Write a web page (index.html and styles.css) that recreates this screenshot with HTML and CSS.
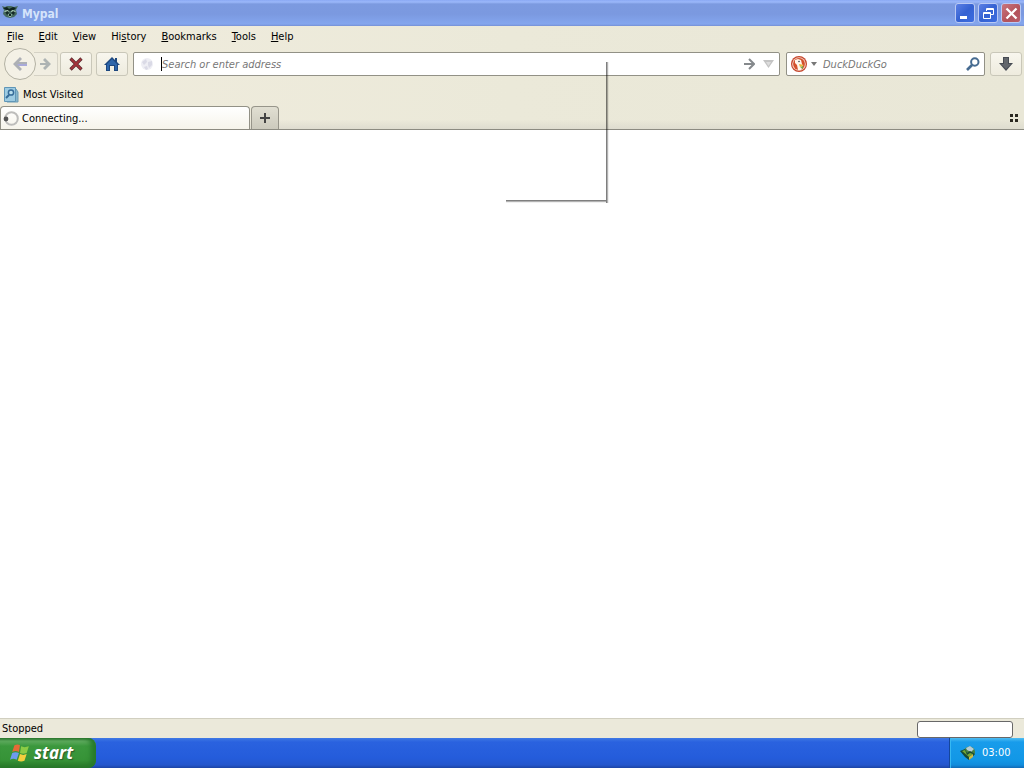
FILE: index.html
```html
<!DOCTYPE html>
<html lang="en">
<head>
<meta charset="utf-8">
<title>Mypal</title>
<link rel="stylesheet" href="styles.css">
</head>
<body>
<header class="titlebar">
  <svg class="app-icon" width="16" height="16" viewBox="0 0 16 16"><path d="M0 2l3 1 2-1h4l3 1 4-1-2 4 1 4-3 3-4 1-4-1-3-3 1-4z" fill="#45695f"/><path d="M1 4l4-1 2 2 4-2 3 1-2 2-4 1-4-1z" fill="#10231f"/><path d="M2 7l4-1 1 2-3 1zM9 8l1-2 4 1-2 2z" fill="#b2d3bd"/><path d="M3 8l3-1 1 2-2 2zM9 9l2-2 2 1-1 3z" fill="#152a25"/><path d="M6 10h4l-1 3H7z" fill="#93b79d"/><path d="M7 10h2v2H7z" fill="#122"/></svg>
  <span class="title">Mypal</span>
  <button class="win-btn" aria-label="Minimize"><svg width="19" height="19" viewBox="0 0 19 19"><path d="M4 12h7v3H4z" fill="#fff"/></svg></button>
  <button class="win-btn" aria-label="Restore"><svg width="19" height="19" viewBox="0 0 19 19" fill="none" stroke="#fff"><path d="M7.500 7V4.500h7v6H12M7 5.500h8M4.500 8.500h7v6h-7zM4 9.500h8"/></svg></button>
  <button class="win-btn close" aria-label="Close"><svg width="19" height="19" viewBox="0 0 19 19"><path d="M4.500 4.500l10 10M14.500 4.500l-10 10" stroke="#fff" stroke-width="2.300"/></svg></button>
</header>
<div class="toolbox">
  <nav class="menubar">
    <button><u>F</u>ile</button><button><u>E</u>dit</button><button><u>V</u>iew</button><button>Hi<u>s</u>tory</button><button><u>B</u>ookmarks</button><button><u>T</u>ools</button><button><u>H</u>elp</button>
  </nav>
  <div class="navbar">
    <div class="history">
      <button class="back" aria-label="Back"><svg width="18" height="16" viewBox="0 0 18 16"><path d="M9 1L2 8l7 7 2-2-3-3h8V6H8l3-3z" fill="#adb0b5"/><path d="M6 8h10v2H8z" fill="#a9aada"/></svg></button>
      <button class="forward" aria-label="Forward"><svg width="13" height="14" viewBox="0 0 13 14"><path d="M6 1l6 6-6 6-2-2 3-3H1V6h6L4 3z" fill="#adb3b3"/></svg></button>
    </div>
    <button class="tool stop" aria-label="Stop"><svg width="16" height="16" viewBox="0 0 16 16"><path d="M2.500 2.500l11 11M13.500 2.500l-11 11" stroke="#5b2d31" stroke-width="3.200"/><path d="M3 3l10 10M13 3L3 13" stroke="#a5343b" stroke-width="1.800"/></svg></button>
    <button class="tool home" aria-label="Home"><svg width="16" height="16" viewBox="0 0 16 16"><path d="M8 1L0 9h2v6h4v-5h4v5h4V9h2l-3-3V2h-2v2z" fill="#1d477f"/><path d="M8 3L3 8v6h2V9h6v5h2V8z" fill="#2d65aa"/></svg></button>
    <div class="field address">
      <svg width="14" height="14" viewBox="0 0 14 14"><circle cx="7" cy="7" r="6" fill="#eeeef4"/><path d="M2 5l4-3 1 3-3 3zM8 5l4-1v4l-3 3-1-3zM4 10l3-1 1 3-2 1z" fill="#dadae6"/></svg>
      <span class="caret"></span>
      <input type="text" aria-label="Address" placeholder="Search or enter address">
      <svg width="11" height="12" viewBox="0 0 11 12" fill="none" stroke="#85898c" stroke-width="2"><path d="M0 6h9M5 1l5 5-5 5"/></svg>
      <svg class="drop" width="11" height="8" viewBox="0 0 11 8"><path d="M0 0h11L5.500 8z" fill="#c4c4c4"/><path d="M3 2h5L5.500 6z" fill="#ddd"/></svg>
    </div>
    <div class="field search">
      <svg width="16" height="16" viewBox="0 0 16 16"><circle cx="8" cy="8" r="8" fill="#c5452b"/><circle cx="8" cy="8" r="6.800" fill="#f5d9cd"/><circle cx="8" cy="8" r="5.900" fill="#d4502c"/><path d="M4 4l3-1 3 1 1 4 1 2-2 4H7L6 9 4 7z" fill="#fff6eb"/><path d="M8 8l5 1-4 2z" fill="#edb83a"/><path d="M9 11l3-1v3z" fill="#70a545"/><circle cx="8" cy="5.500" r=".8" fill="#345"/></svg>
      <svg class="engine-drop" width="6" height="4" viewBox="0 0 6 4"><path d="M0 0h6L3 4z" fill="#777"/></svg>
      <input type="text" aria-label="Search" placeholder="DuckDuckGo">
      <svg width="14" height="14" viewBox="0 0 14 14" fill="none" stroke="#466b91"><circle cx="8.800" cy="5" r="3.700" stroke-width="2"/><path d="M6 8l-5 5" stroke-width="2.600"/></svg>
    </div>
    <button class="tool" aria-label="Downloads"><svg width="16" height="16" viewBox="0 0 16 16"><path d="M5 1h6v6h4l-7 8-7-8h4z" fill="#454a52"/><path d="M6 2h4v6h3l-5 5-5-5h3z" fill="#62666c"/></svg></button>
  </div>
  <div class="bookmarks">
    <svg width="15" height="16" viewBox="0 0 15 16"><path d="M3 2h9l2 3v10H3z" fill="#87b6cc" stroke="#6b9ab4"/><path d="M.5.5h11v14H.5z" fill="#9dcbe2" stroke="#6096b7"/><circle cx="7" cy="5.500" r="2.600" fill="#b9deed" stroke="#356b98" stroke-width="1.500"/><path d="M5 8l-3 3" stroke="#356b98" stroke-width="2"/></svg>
    <a href="#">Most Visited</a>
  </div>
  <div class="tabs">
    <button class="tab"><svg width="16" height="16" viewBox="0 0 16 16"><circle cx="8.500" cy="7.500" r="6.300" fill="none" stroke="#bdbdbb" stroke-width="2"/><circle cx="3" cy="8" r="2.400" fill="#555"/></svg><span>Connecting...</span></button>
    <button class="new-tab" aria-label="New tab"><svg width="12" height="12" viewBox="0 0 12 12"><path d="M5 1h2v4h4v2H7v4H5V7H1V5h4z" fill="#444"/></svg></button>
    <button class="groups" aria-label="Tab groups"><svg width="8" height="8" viewBox="0 0 8 8"><path d="M0 0h3v3H0zM5 0h3v3H5zM0 5h3v3H0zM5 5h3v3H5z" fill="#292720"/></svg></button>
  </div>
</div>
<main class="content"></main>
<div class="ghost-shadow"></div>
<footer class="status"><span>Stopped</span><div class="progress"></div></footer>
<div class="taskbar">
  <button class="start"><svg width="20" height="20" viewBox="0 0 18 18"><path d="M4 2c2-1 4-1 5 0L8 8c-2-1-4-1-6 0z" fill="#e56a37"/><path d="M10 3c2 1 4 1 7 0l-2 6c-2 1-4 1-6 0z" fill="#8bcb45"/><path d="M2 9c2-1 4-1 6 0l-2 6c-2-1-4-1-6 0z" fill="#6e9bee"/><path d="M9 10c2 1 4 1 6 0l-2 6c-2 1-4 1-6 0z" fill="#f3ce3e"/></svg>start</button>
  <div class="tray"><svg width="16" height="16" viewBox="0 0 16 16"><circle cx="9.500" cy="7" r="5.500" fill="#4a8143"/><path d="M6 3l4-2 4 3-3 3-4-2z" fill="#b5ccd6"/><path d="M0 6l5-2 2 4 3-2 5 3-6 6-4-3z" fill="#174a36"/><path d="M2 6l3-1 2 5 3-2 3 1-4 3z" fill="#75a634"/><path d="M9 12l4-3v3l-4 3z" fill="#cebb45"/></svg><time>03:00</time></div>
</div>
</body>
</html>
```
FILE: styles.css
```css
* { box-sizing: border-box; }
body {
  margin: 0;
  height: 100vh;
  display: flex;
  flex-direction: column;
  overflow: hidden;
  background: #fff;
  color: #000;
  font: 11px/14px "DejaVu Sans Condensed", "DejaVu Sans", sans-serif;
}
button, input { font: inherit; color: inherit; padding: 0; border: 0; background: none; }
svg { display: block; flex: none; }

.titlebar {
  display: flex;
  align-items: center;
  gap: 4px;
  height: 26px;
  padding: 0 3px 0 2px;
  background: linear-gradient(#8aa9f4 0, #9bb8fa 2px, #7c9ae0 4px, #7b99e0 14px, #84a6ee 24px, #7590d5 26px);
}
.app-icon { align-self: flex-start; margin-top: 4px; }
.title { flex: 1; padding-top: 1px; color: #d5e4fb; font: bold 12px/16px "DejaVu Sans Condensed", sans-serif; }
.win-btn {
  display: grid;
  place-items: center;
  width: 20px;
  height: 20px;
  border: 1px solid #b9c9f4;
  border-radius: 3px;
  background: linear-gradient(135deg, #5c80e5, #3562d2 50%, #3c6ce0);
}
.win-btn + .win-btn { margin-left: -1px; }
.win-btn.close { background: linear-gradient(135deg, #c9767e, #b3525a 60%, #b85d6b); }

.toolbox { background: linear-gradient(90deg, #f0ecdd, #ebe9d9 50%, #e9e7d7); }
.menubar { display: flex; align-items: center; gap: 15px; height: 21px; padding: 0 7px; }
.navbar { display: flex; align-items: center; height: 34px; padding: 0 2px 0 4px; }
.history { display: flex; align-items: center; margin-right: 2px; }
.back {
  display: grid;
  place-items: center;
  width: 32px;
  height: 32px;
  border: 1px solid #b3b1a3;
  border-radius: 50%;
  background: #f4f1e6;
  z-index: 1;
}
.forward {
  display: grid;
  place-items: center;
  width: 24px;
  height: 24px;
  margin-left: -2px;
  border: 1px solid #d5d2c5;
  border-left: 0;
  border-radius: 0 3px 3px 0;
  background: #f1eee2;
}
.tool {
  display: grid;
  place-items: center;
  width: 32px;
  height: 24px;
  border: 1px solid #c9c7b9;
  border-radius: 3px;
  background: linear-gradient(#f8f6ee, #eeebde);
}
.home { margin: 0 5px 0 4px; }
.field {
  display: flex;
  align-items: center;
  height: 24px;
  border: 1px solid #929186;
  border-radius: 2px;
  background: #fff;
}
.field input { flex: 1; min-width: 0; height: 20px; padding-top: 1px; outline: 0; font-style: italic; }
.field input::placeholder { color: #777; opacity: 1; }
.address { flex: 1; padding: 0 5px 0 6px; }
.caret { width: 1px; height: 14px; margin-left: 7px; background: #000; }
.drop { margin-left: 8px; }
.search { width: 199px; margin: 0 5px 0 6px; padding: 0 4px; }
.engine-drop { margin: 0 6px 0 4px; }

.bookmarks { display: flex; align-items: center; gap: 4px; height: 25px; padding: 2px 4px 0; }
.bookmarks a { color: inherit; text-decoration: none; }
.tabs {
  display: flex;
  align-items: flex-end;
  height: 24px;
  border-bottom: 1px solid #8c8b81;
  background: linear-gradient(transparent 60%, #dedccf);
}
.tab {
  display: flex;
  align-items: center;
  gap: 3px;
  width: 250px;
  height: 23px;
  padding: 1px 3px 0 2px;
  border: 1px solid #929186;
  border-bottom: 0;
  border-radius: 4px 4px 0 0;
  background: linear-gradient(#fff, #f6f4eb);
}
.new-tab {
  display: grid;
  place-items: center;
  width: 28px;
  height: 23px;
  margin-left: 1px;
  border: 1px solid #97958a;
  border-bottom: 0;
  border-radius: 4px 4px 0 0;
  background: linear-gradient(#e1dfd2, #cccabd);
}
.groups { margin: 0 6px 7px auto; }
.content { flex: 1; background: #fff; }

/* Drop shadow left by a closed popup. */
.ghost-shadow {
  position: absolute;
  left: 506px;
  top: 62px;
  width: 103px;
  height: 141px;
  background:
    linear-gradient(90deg, rgba(0,0,0,.5) 1px, rgba(0,0,0,.3) 1px 2px, rgba(0,0,0,.06) 2px) right top / 3px 100% no-repeat,
    linear-gradient(rgba(0,0,0,.5) 1px, rgba(0,0,0,.3) 1px 2px, rgba(0,0,0,.06) 2px) left bottom / 100px 3px no-repeat;
  pointer-events: none;
}

.status {
  display: flex;
  align-items: center;
  justify-content: space-between;
  height: 20px;
  padding: 1px 11px 0 2px;
  border-top: 1px solid #d1cfc0;
  background: #ebe9da;
}
.progress { width: 96px; height: 17px; border: 1px solid #686868; border-radius: 3px; background: #fff; }
.taskbar {
  display: flex;
  justify-content: space-between;
  height: 30px;
  background: linear-gradient(#3f79e4 0, #2a62df 4px, #245cdb 20px, #2456cc 27px, #1c44a4);
}
.start {
  display: flex;
  align-items: center;
  gap: 4px;
  width: 96px;
  padding: 0 10px;
  border-radius: 0 8px 8px 0;
  background: linear-gradient(#2d7430 0, #60ac60 3px, #3b983d 8px, #369337 22px, #277527);
  box-shadow: inset -5px 0 5px #277a2b;
  color: #fff;
  font: italic bold 17px/24px "Open Sans", sans-serif;
  text-shadow: 1px 1px 1px #2b5a2b;
}
.tray {
  display: flex;
  align-items: center;
  gap: 6px;
  width: 75px;
  padding: 0 10px;
  border-left: 1px solid #15469b;
  background: linear-gradient(#4fbdf2 0, #189ceb 4px, #1297e6 22px, #118cdc 27px, #1169b5);
  box-shadow: inset 1px 0 #36b8f2;
  color: #fff;
}
```
